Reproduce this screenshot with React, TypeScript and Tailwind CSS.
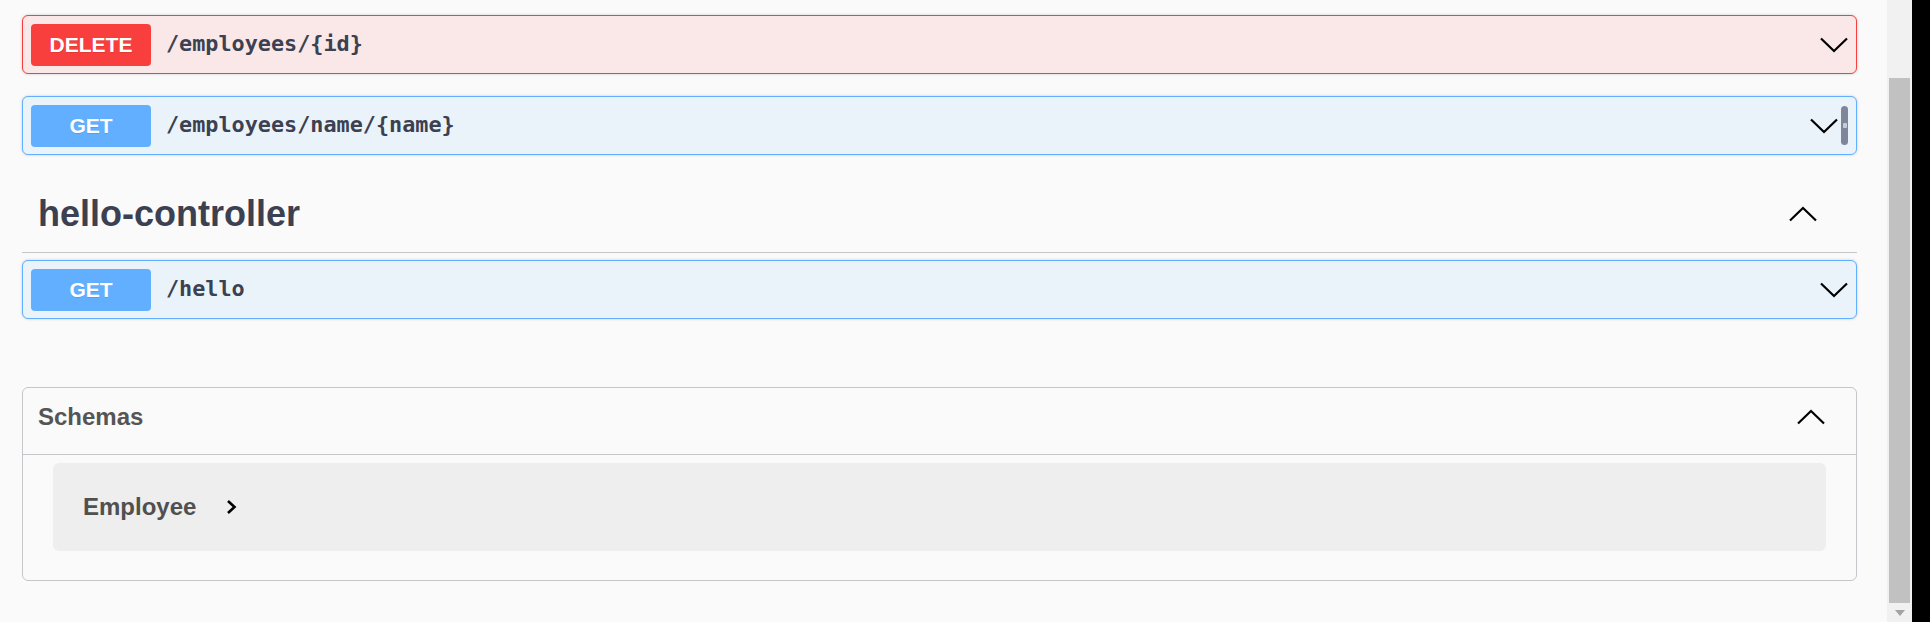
import React from 'react';

const sans = { fontFamily: '"Liberation Sans", Arial, sans-serif' };
const mono = { fontFamily: '"DejaVu Sans Mono", "Liberation Mono", monospace' };

function ChevronDown() {
  return (
    <svg width="28" height="16" viewBox="0 0 28 16" fill="none" aria-hidden="true">
      <polyline points="1,1.5 14,14 27,1.5" stroke="#000" strokeWidth="2.2" />
    </svg>
  );
}

function ChevronUp() {
  return (
    <svg width="28" height="16" viewBox="0 0 28 16" fill="none" aria-hidden="true">
      <polyline points="1,14.5 14,2 27,14.5" stroke="#000" strokeWidth="2.2" />
    </svg>
  );
}

type Method = 'DELETE' | 'GET';

function Opblock({ method, path, handle }: { method: Method; path: string; handle?: boolean }) {
  const isDelete = method === 'DELETE';
  return (
    <div
      className={
        'flex h-[59px] items-center rounded-[6px] border pl-[8px] pr-[8px] shadow-[0_0_3px_rgba(0,0,0,0.19)] ' +
        (isDelete ? 'border-[#f93e3e] bg-[#fae7e7]' : 'border-[#61affe] bg-[#ebf3fa]')
      }
    >
      <span
        className={
          'flex h-[42px] w-[120px] shrink-0 items-center justify-center rounded-[4px] text-[21px] font-bold text-white [text-shadow:0_1px_0_rgba(0,0,0,0.1)] ' +
          (isDelete ? 'bg-[#f93e3e]' : 'bg-[#61affe]')
        }
        style={sans}
      >
        {method}
      </span>
      <span className="ml-[15px] flex-1 text-[21.8px] font-bold text-[#3b4151]" style={mono}>
        {path}
      </span>
      <div className={'flex items-center ' + (handle ? 'gap-[3px]' : '')}>
        <ChevronDown />
        {handle && (
          <div className="flex h-[39px] w-[7px] items-center justify-center rounded-full bg-[#80869a]">
            <div className="h-[5px] w-[4px] rounded-[1px] bg-[#c9ccd4]" />
          </div>
        )}
      </div>
    </div>
  );
}

export default function App() {
  return (
    <div className="flex h-[622px] w-full overflow-hidden bg-[#fafafa]" style={sans}>
      {/* page */}
      <div className="min-w-0 flex-1 pl-[22px] pr-[30px] pt-[15px]">
        <Opblock method="DELETE" path="/employees/{id}" />
        <div className="mt-[22px]">
          <Opblock method="GET" path="/employees/name/{name}" handle />
        </div>

        {/* hello-controller tag */}
        <div className="flex items-center border-b border-[#c4c6ca] pb-[20px] pl-[16px] pr-[40px] pt-[41px]">
          <h3 className="flex-1 text-[36px] font-bold leading-[36px] text-[#3b4151]">hello-controller</h3>
          <ChevronUp />
        </div>
        <div className="mt-[7px]">
          <Opblock method="GET" path="/hello" />
        </div>

        {/* Schemas */}
        <div className="mt-[68px] rounded-[6px] border border-[#c4c6ca]">
          <div className="flex h-[67px] items-center border-b border-[#c4c6ca] pb-[8px] pl-[15px] pr-[31px]">
            <h4 className="flex-1 text-[24px] font-bold leading-[28px] text-[#555]">Schemas</h4>
            <ChevronUp />
          </div>
          <div className="pb-[29px] pl-[30px] pr-[30px] pt-[8px]">
            <div className="flex h-[88px] items-center rounded-[6px] bg-[#eeeeee] pl-[30px]">
              <span className="text-[24px] font-bold text-[#505050]">Employee</span>
              <svg className="ml-[30px]" width="11" height="16" viewBox="0 0 11 16" fill="none" aria-hidden="true">
                <polyline points="2,2 8.5,8 2,14" stroke="#000" strokeWidth="2.6" />
              </svg>
            </div>
          </div>
        </div>
      </div>

      {/* scrollbar */}
      <div className="flex w-[25px] shrink-0 flex-col bg-[#f1f1f1]">
        <div className="h-[78px]" />
        <div className="mx-[2px] h-[525px] bg-[#c1c1c1]" />
        <div className="flex flex-1 items-center justify-center">
          <svg width="10" height="6" viewBox="0 0 10 6" aria-hidden="true">
            <polygon points="0,0 10,0 5,6" fill="#a3a3a3" />
          </svg>
        </div>
      </div>
      <div className="w-[18px] shrink-0 bg-black" />
    </div>
  );
}
